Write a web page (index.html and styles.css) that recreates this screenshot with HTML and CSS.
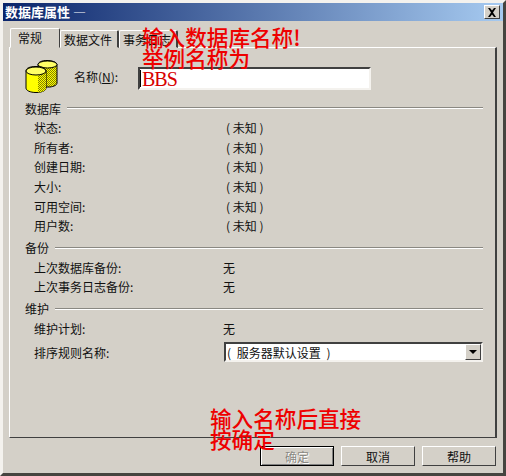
FILE: index.html
```html
<!DOCTYPE html>
<html lang="zh-CN">
<head>
  <meta charset="UTF-8">
  <meta name="viewport" content="width=device-width, initial-scale=1.0">
  <title>数据库属性</title>
  <link rel="stylesheet" href="styles.css">
</head>
<body>
  <div class="window">
    <div class="titlebar">
      <span class="title">数据库属性 —</span>
      <button class="close">
        <svg width="10" height="9" viewBox="0 0 10 9"><path d="M1 0h2l2 2.6L7 0h2L6 4.5 9 9H7L5 6.4 3 9H1l3-4.500z" fill="#000"/></svg>
      </button>
    </div>

    <div class="tabs">
      <div class="tab active">常规</div>
      <div class="tab">数据文件</div>
      <div class="tab">事务日志</div>
    </div>

    <div class="panel">
      <div class="name-row">
        <svg class="db-icon" width="34" height="34" viewBox="0 0 34 34">
          <defs>
            <pattern id="dither" width="2" height="2" patternUnits="userSpaceOnUse">
              <rect width="2" height="2" fill="#ffff00"/>
              <rect width="1" height="1" fill="#808000"/>
              <rect x="1" y="1" width="1" height="1" fill="#808000"/>
            </pattern>
          </defs>
          <path d="M13 6c0-3 4-4.500 9-4.500s10 1.500 10 4.500v18c0 2-3 3.500-7 4H13z" fill="url(#dither)" stroke="#000"/>
          <ellipse cx="22.500" cy="5.500" rx="9.500" ry="3.500" fill="#ffff66" stroke="#000"/>
          <path d="M1 12c0-3 4-4.500 10-4.500S21 9 21 12v17c0 2.500-4 4.500-10 4.500S1 31.500 1 29z" fill="#ffff00" stroke="#000"/>
          <path d="M13 14h8v15c0 2.500-3 4-8 4.400z" fill="url(#dither)"/>
          <ellipse cx="11" cy="12" rx="10" ry="4" fill="#ffff66" stroke="#000"/>
        </svg>
        <label class="name-label">名称(<u>N</u>):</label>
        <div class="field"><i class="caret"></i>BBS</div>
      </div>

      <div class="group-head"><span>数据库</span><i></i></div>
      <div class="rows">
        <div class="row"><span>状态:</span><span class="val">( 未知 )</span></div>
        <div class="row"><span>所有者:</span><span class="val">( 未知 )</span></div>
        <div class="row"><span>创建日期:</span><span class="val">( 未知 )</span></div>
        <div class="row"><span>大小:</span><span class="val">( 未知 )</span></div>
        <div class="row"><span>可用空间:</span><span class="val">( 未知 )</span></div>
        <div class="row"><span>用户数:</span><span class="val">( 未知 )</span></div>
      </div>

      <div class="group-head"><span>备份</span><i></i></div>
      <div class="rows">
        <div class="row"><span>上次数据库备份:</span><span class="val2">无</span></div>
        <div class="row"><span>上次事务日志备份:</span><span class="val2">无</span></div>
      </div>

      <div class="group-head"><span>维护</span><i></i></div>
      <div class="rows">
        <div class="row"><span>维护计划:</span><span class="val2">无</span></div>
        <div class="row combo-row">
          <span>排序规则名称:</span>
          <div class="combo">
            <span class="combo-text">( 服务器默认设置 )</span>
            <span class="combo-btn"><b></b></span>
          </div>
        </div>
      </div>
    </div>

    <div class="buttons">
      <button class="btn default" disabled>确定</button>
      <button class="btn">取消</button>
      <button class="btn">帮助</button>
    </div>

    <div class="note note-top">输入数据库名称!<br>举例名称为</div>
    <div class="note note-bottom">输入名称后直接<br>按确定</div>
  </div>
</body>
</html>
```

FILE: styles.css
```css
html, body {
  margin: 0;
  padding: 0;
}
body {
  width: 506px;
  height: 476px;
  overflow: hidden;
  font-family: "Noto Sans CJK SC", "Liberation Sans", sans-serif;
  font-size: 12px;
  color: #111;
}
.window {
  position: relative;
  box-sizing: border-box;
  width: 506px;
  height: 476px;
  background: #d4d0c8;
  border: 3px solid;
  border-color: #f4f2ee #45443f #45443f #f4f2ee;
  display: flex;
  flex-direction: column;
}
.titlebar {
  height: 18px;
  flex: none;
  display: flex;
  align-items: center;
  justify-content: space-between;
  padding: 0 3px 0 2px;
  background: linear-gradient(to right, #0a246a, #a6caf0);
}
.title {
  color: #fff;
  font-weight: 700;
  font-size: 13px;
  line-height: 18px;
}
.close {
  width: 16px;
  height: 14px;
  padding: 0;
  box-sizing: border-box;
  background: #d4d0c8;
  border: 1px solid;
  border-color: #fff #404040 #404040 #fff;
  display: flex;
  align-items: center;
  justify-content: center;
}
.tabs {
  display: flex;
  height: 19px;
  margin: 7px 0 0 7px;
  flex: none;
  position: relative;
  z-index: 1;
}
.tab {
  box-sizing: border-box;
  height: 18px;
  margin-top: 2px;
  padding: 0 3px;
  line-height: 17px;
  background: #d4d0c8;
  border: 1px solid #d4d0c8;
  border-top-color: #fff;
  border-left-color: #fff;
  border-right: 2px solid #404040;
  border-radius: 2px 2px 0 0;
  width: 59px;
}
.tab.active {
  width: 50px;
  height: 20px;
  margin-top: 0;
  padding-left: 7px;
  border-right: 1px solid #404040;
}
.panel {
  box-sizing: border-box;
  width: 488px;
  height: 391px;
  margin-left: 6px;
  flex: none;
  border: 1px solid;
  border-color: #fff #404040 #404040 #fff;
  border-right-width: 2px;
  padding: 12px 12px 0 15px;
}
.name-row {
  display: flex;
  align-items: center;
  height: 34px;
}
.db-icon {
  flex: none;
  margin-top: -2px;
}
.name-label {
  margin: -2px 0 0 15px;
  width: 64px;
  flex: none;
}
.field {
  box-sizing: border-box;
  width: 233px;
  height: 23px;
  align-self: flex-start;
  margin-top: 7px;
  background: #fff;
  border: 2px solid;
  border-color: #404040 #f4f2ee #f4f2ee #404040;
  font-family: "Liberation Serif", serif;
  font-size: 20px;
  line-height: 20px;
  color: #d80000;
  letter-spacing: -1px;
  display: flex;
  align-items: center;
}
.caret {
  width: 1px;
  height: 17px;
  background: #000;
  margin-right: 1px;
}
.group-head {
  display: flex;
  align-items: center;
  gap: 6px;
  height: 20px;
}
.group-head i {
  flex: 1;
  height: 2px;
  background: #8a8882;
  border-bottom: 1px solid #fff;
  box-sizing: border-box;
}
.name-row + .group-head {
  margin-top: 4px;
}
.rows + .group-head {
  margin-top: 2px;
}
.rows {
  padding-left: 9px;
}
.row {
  display: flex;
  height: 19.6px;
  align-items: center;
}
.row > span:first-child {
  width: 192px;
  flex: none;
}
.val {
  color: #111;
}
.val2 {
  margin-left: -3px;
}
.combo-row {
  height: 24px;
  margin-top: 2px;
}
.combo {
  box-sizing: border-box;
  width: 260px;
  height: 20px;
  margin-left: -2px;
  background: #fff;
  border: 2px solid;
  border-color: #404040 #f4f2ee #f4f2ee #404040;
  display: flex;
  align-items: center;
  justify-content: space-between;
}
.combo-text {
  padding-left: 1px;
  word-spacing: 3px;
}
.combo-btn {
  box-sizing: border-box;
  width: 16px;
  height: 16px;
  background: #d4d0c8;
  border: 1px solid;
  border-color: #fff #404040 #404040 #fff;
  display: flex;
  align-items: center;
  justify-content: center;
}
.combo-btn b {
  width: 0;
  height: 0;
  border: 4px solid transparent;
  border-top-color: #000;
  border-bottom-width: 0;
}
.buttons {
  display: flex;
  justify-content: flex-end;
  gap: 7px;
  margin: 8px 0 0 0;
  padding-right: 7px;
}
.btn {
  box-sizing: border-box;
  width: 74px;
  height: 20px;
  padding: 0;
  font-family: inherit;
  font-size: 12px;
  color: #111;
  background: #d4d0c8;
  border: 1px solid;
  border-color: #fff #404040 #404040 #fff;
}
.btn.default {
  border: 1px solid #000;
  color: #8a8882;
  text-shadow: 1px 1px 0 #fff;
  box-shadow: inset 1px 1px 0 #fff, inset -1px -1px 0 #808080;
}
.note {
  position: absolute;
  z-index: 2;
  color: #ee0000;
  font-size: 21.6px;
  font-weight: 500;
  line-height: 21px;
  pointer-events: none;
}
.note-top {
  left: 139px;
  top: 23px;
}
.note-bottom {
  left: 207px;
  top: 404px;
}
```
